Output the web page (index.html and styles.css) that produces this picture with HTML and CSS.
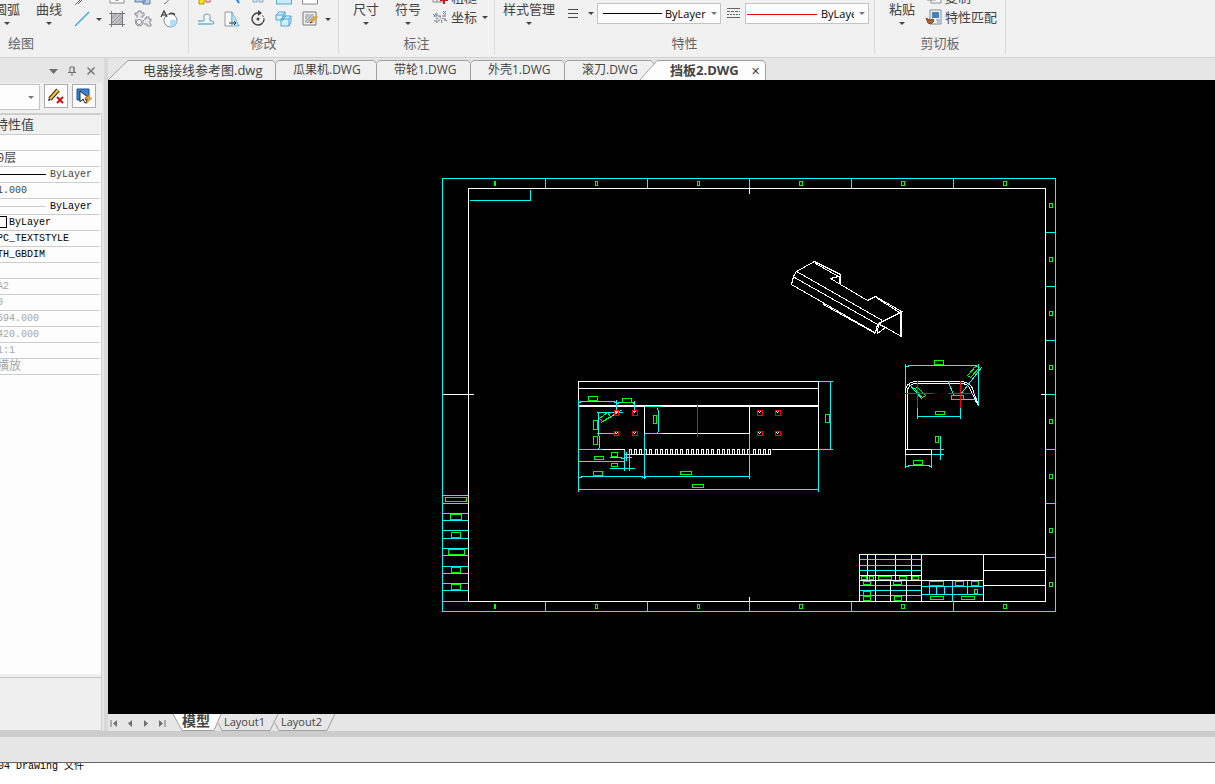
FILE: index.html
```
<!DOCTYPE html>
<html lang="zh-CN">
<head>
    <meta charset="UTF-8">
    <meta name="viewport" content="width=device-width, initial-scale=1.0">
    <title>挡板2.DWG</title>
    <link rel="stylesheet" href="styles.css">
</head>
<body>

<header class="ribbon">
    <section class="group group-draw">
        <div class="tools">
            <button class="big-btn">圆弧<span class="caret"></span></button>
            <button class="big-btn">曲线<span class="caret"></span></button>
            <div class="icon-grid grid-draw">
                <button class="icon-btn" aria-label="平行线"><svg width="18" height="18" viewBox="0 0 18 18"><path d="M2 15L13 4M5 14L11 8" stroke="#606068"/></svg></button>
                <span></span>
                <button class="icon-btn" aria-label="矩形"><svg width="18" height="18" viewBox="0 0 18 18"><path d="M2 2h14v11H2z" fill="#fff" stroke="#888"/><path d="M7 10h4" stroke="#555"/></svg></button>
                <button class="icon-btn" aria-label="块"><svg width="18" height="18" viewBox="0 0 18 18"><path d="M1 5h10v7H1zM9 8h7v6H9z" fill="#b4cbe5" stroke="#637f9e"/></svg></button>
                <button class="icon-btn" aria-label="圆弧"><svg width="18" height="18" viewBox="0 0 18 18"><path d="M4 14q5-2 6-9" stroke="#777" fill="none"/></svg></button>
                <button class="icon-btn" aria-label="直线"><svg width="18" height="18" viewBox="0 0 18 18"><path d="M2 16L16 2" stroke="#2ca9dc" stroke-width="1.3"/></svg></button>
                <button class="icon-btn" aria-label="更多直线"><span class="caret"></span></button>
                <button class="icon-btn" aria-label="填充"><svg width="18" height="18" viewBox="0 0 18 18" shape-rendering="crispEdges"><path d="M3 3h11v11H3z" fill="#c0c0c2"/><path d="M4 8l4-4M4 13l9-9M7 14l7-7M11 14l3-3" stroke="#9a9a9c"/><path d="M1 3.500h16M1 14.500h16M3.500 1v16M14.500 1v16" stroke="#77777c"/></svg></button>
                <button class="icon-btn" aria-label="零件"><svg width="18" height="18" viewBox="0 0 18 18"><path d="M3 8V5H1V3h3V1h3v2h3v3H8v2M10 9h2V7h3v2h2v2h-1v3h1v2h-4v-2h-3M2 9q-2 7 4 7q4-1 3-6" fill="#e4e5e8" stroke="#888c94"/><circle cx="5" cy="12" r="2.500" fill="#fff" stroke="#888c94"/></svg></button>
                <button class="icon-btn" aria-label="公式曲线"><svg width="18" height="18" viewBox="0 0 18 18"><circle cx="10.500" cy="10.500" r="6.500" fill="#f5fbff" stroke="#858b92"/><path d="M10 10h7a6.500 6.500 0 0 1-7 7z" fill="#aedff8"/><path d="M1 7l3-6 3 6M2 5h4M9 4q4-2 6 1" fill="none" stroke="#333" stroke-width="1.2"/></svg></button>
            </div>
        </div>
        <h2>绘图</h2>
    </section>

    <section class="group group-edit">
        <div class="tools">
            <div class="icon-grid grid-edit">
                <button class="icon-btn" aria-label="删除"><svg width="18" height="18" viewBox="0 0 18 18"><path d="M2 6h5v8H2z" fill="#ffe011" stroke="#b39700"/><path d="M9 8h4v4H9z" fill="#fff" stroke="#d33a3a"/></svg></button>
                <button class="icon-btn" aria-label="裁剪"><svg width="18" height="18" viewBox="0 0 18 18"><path d="M11 5l5 8" stroke="#2380d8" stroke-width="2"/></svg></button>
                <button class="icon-btn" aria-label="镜像"><svg width="18" height="18" viewBox="0 0 18 18"><path d="M4 7h4v5H4zM10 7h4v5h-4z" fill="#d6ebf7" stroke="#8ba8bb"/></svg></button>
                <button class="icon-btn" aria-label="平移"><svg width="18" height="18" viewBox="0 0 18 18"><path d="M1.500 3h15v11h-15z" fill="#c8ecfc" stroke="#5aa7cf"/></svg></button>
                <button class="icon-btn" aria-label="拉伸"><svg width="18" height="18" viewBox="0 0 18 18"><path d="M1.500 3h15v11h-15z" fill="#fff" stroke="#888"/></svg></button>
                <span></span>
                <button class="icon-btn" aria-label="等距线"><svg width="18" height="18" viewBox="0 0 18 18"><path d="M1 11h5q2 0 1-3-1-4 3-4t3 4q-1 3 1 3 3 0 3 2 0 1-2 1H1" fill="#eef8fd" stroke="#6d91a9"/><path d="M1 11h5M1 14h12" stroke="#6cbfe8"/></svg></button>
                <button class="icon-btn" aria-label="过渡"><svg width="18" height="18" viewBox="0 0 18 18"><path d="M2 2h7v14H2z" fill="#f8f8f8" stroke="#9a9a9a"/><path d="M9 2l7 14H9z" fill="#bfe9ff" stroke="#70b9db"/><path d="M6 13h6M11 11l2 2-2 2" stroke="#333" fill="none"/></svg></button>
                <button class="icon-btn" aria-label="旋转"><svg width="18" height="18" viewBox="0 0 18 18"><path d="M10 3a6 6 0 1 0 5 7" fill="none" stroke="#3d3d42" stroke-width="1.4"/><path d="M15 10a6 6 0 0 0-2-5" fill="none" stroke="#3d3d42" stroke-dasharray="2 1"/><path d="M9 0l4 3-4 3z" fill="#3d3d42"/><circle cx="9" cy="9" r="1.500" fill="#3d3d42"/></svg></button>
                <button class="icon-btn" aria-label="阵列"><svg width="18" height="18" viewBox="0 0 18 18"><path d="M1 5l3-3h6v5l-2 3H1zM1 5h7v5M8 5l2-3M6 9l3-3h7v6l-2 4H6zM6 9h8v7M14 9l2-3" fill="#d5effc" stroke="#4ba5d5"/></svg></button>
                <button class="icon-btn" aria-label="分解"><svg width="18" height="18" viewBox="0 0 18 18"><path d="M2 2h13v13H2z" fill="#f4f4f4" stroke="#77777c"/><path d="M4 4h9v9H4z" fill="#c8c8ca"/><path d="M4 8l4-4M4 12l8-8M6 13l7-7M10 13l3-3" stroke="#a5a5a8"/><path d="M10 12l6-6" stroke="#dda340" stroke-width="3"/><path d="M9 13l2-1" stroke="#333"/></svg></button>
                <button class="icon-btn" aria-label="更多修改"><span class="caret"></span></button>
            </div>
        </div>
        <h2>修改</h2>
    </section>

    <section class="group group-dim">
        <div class="tools">
            <button class="big-btn">尺寸<span class="caret"></span></button>
            <button class="big-btn">符号<span class="caret"></span></button>
            <div class="text-tools">
                <button class="text-btn"><svg width="18" height="18" viewBox="0 0 18 18"><path d="M2 9h11v5H2zM6 9v5M10 9v5" fill="none" stroke="#888"/><path d="M13 8v8M9 12h8" stroke="#c51c1c" stroke-width="2"/></svg>粗糙</button>
                <button class="text-btn"><svg width="18" height="18" viewBox="0 0 18 18"><path d="M6 5v10M3 8h12M3 13h4q3 0 2-5M11 15q-2-8 5-2M14 6v8" stroke="#777b82" fill="none" stroke-dasharray="3 1"/><path d="M2 6l2 2M5 5L3 9M12 3l3 3M15 3l-3 3" stroke="#4b93cf"/></svg>坐标<span class="caret"></span></button>
            </div>
        </div>
        <h2>标注</h2>
    </section>

    <section class="group group-props">
        <div class="tools">
            <button class="big-btn style-btn">样式管理<span class="caret"></span></button>
            <div class="prop-row">
                <button class="icon-btn width-btn" aria-label="线宽"><svg width="12" height="12" viewBox="0 0 12 12" shape-rendering="crispEdges"><path d="M1 2.500h10M1 6.500h10M1 10.500h10" stroke="#4c4c50" stroke-width="1"/></svg><span class="caret"></span></button>
                <div class="combo"><select class="line-black" aria-label="线型"><option>ByLayer</option></select></div>
                <button class="icon-btn type-btn" aria-label="线型设置"><svg width="13" height="12" viewBox="0 0 13 12" shape-rendering="crispEdges"><path d="M0 1.500h13M0 10.500h13" stroke="#666"/><path d="M0 4.500h13" stroke="#666" stroke-dasharray="3 1"/><path d="M0 7.500h13" stroke="#666" stroke-dasharray="2 1"/></svg></button>
                <div class="combo"><select class="line-red" aria-label="颜色"><option>ByLayer</option></select></div>
            </div>
        </div>
        <h2>特性</h2>
    </section>

    <section class="group group-clip">
        <div class="tools">
            <button class="big-btn">粘贴<span class="caret"></span></button>
            <div class="text-tools">
                <button class="text-btn"><svg width="18" height="18" viewBox="0 0 18 18"><path d="M2 3h9v9H2zM6 6h10v9H6z" fill="#fff" stroke="#888"/></svg>复制</button>
                <button class="text-btn"><svg width="18" height="18" viewBox="0 0 18 18"><path d="M5 2h11v14H5z" fill="#f2f6fa" stroke="#828a94"/><path d="M7 4h7v6H7z" fill="#4b7fb8"/><path d="M11 12h4M12 14h3" stroke="#5b8cc0"/><path d="M1 10l4 2 3-1 1 2-3 3-3-1z" fill="#ab6629" stroke="#7b451a"/></svg>特性匹配</button>
            </div>
        </div>
        <h2>剪切板</h2>
    </section>
</header>

<main class="workspace">
    <aside class="panel">
        <div class="panel-title">
            <button aria-label="菜单"><svg width="10" height="10" viewBox="0 0 10 10"><path d="M1 3h9L5.500 8z" fill="#707070"/></svg></button>
            <button aria-label="固定"><svg width="10" height="10" viewBox="0 0 10 10"><path d="M3 6V1h4v5M1 6.500h8M5 6v4M7 1v5" fill="none" stroke="#707070"/></svg></button>
            <button aria-label="关闭"><svg width="10" height="10" viewBox="0 0 10 10"><path d="M1.500 1.500l7 7M8.500 1.500l-7 7" stroke="#707070" stroke-width="1.400"/></svg></button>
        </div>
        <div class="panel-bar">
            <div class="combo pick-combo"><select aria-label="选择对象"><option></option></select></div>
            <button class="panel-btn" aria-label="取消选择"><svg width="18" height="18" viewBox="0 0 18 18"><path d="M3 12l8-9" stroke="#53360c" stroke-width="4.500"/><path d="M3 12l8-9" stroke="#f6c451" stroke-width="2"/><path d="M1 14l1-3 2 2z" fill="#222"/><path d="M10 10l6 6M16 10l-6 6" stroke="#c01818" stroke-width="2"/></svg></button>
            <button class="panel-btn" aria-label="快速选择"><svg width="18" height="18" viewBox="0 0 18 18"><path d="M2 2h12v11H2z" fill="#3a82d0" stroke="#1c5295"/><path d="M5 4v11l3-3 2 4 2-1-2-4h4z" fill="#fff" stroke="#222"/><path d="M14 8l-4 4h3l-2 5 6-6h-3z" fill="#f8a31c" stroke="#c87808" stroke-width=".5"/></svg></button>
        </div>
        <div class="sheet">
            <table>
                <thead>
                    <tr><th scope="col">特性值</th></tr>
                </thead>
                <tbody>
                    <tr><td></td></tr>
                    <tr><td class="cn">0层</td></tr>
                    <tr><td><span class="swatch-line"></span>ByLayer</td></tr>
                    <tr><td>1.000</td></tr>
                    <tr class="strong"><td><span class="swatch-line light"></span>ByLayer</td></tr>
                    <tr class="strong"><td><span class="swatch-box"></span>ByLayer</td></tr>
                    <tr class="strong"><td>PC_TEXTSTYLE</td></tr>
                    <tr class="strong"><td>TH_GBDIM</td></tr>
                    <tr><td></td></tr>
                    <tr class="muted"><td>A2</td></tr>
                    <tr class="muted"><td>0</td></tr>
                    <tr class="muted"><td>594.000</td></tr>
                    <tr class="muted"><td>420.000</td></tr>
                    <tr class="muted"><td>1:1</td></tr>
                    <tr class="muted"><td class="cn">横放</td></tr>
                </tbody>
            </table>
        </div>
        <div class="hint"></div>
    </aside>

    <section class="document">
        <nav class="doc-tabs">
            <button class="doc-tab tab-first"><svg width="169" height="20" viewBox="0 0 169 20"><path d="M0 20L20 .5H165l2.500 3V20"/></svg>电器接线参考图.dwg</button>
            <button class="doc-tab tab-wide"><svg width="102" height="20" viewBox="0 0 102 20"><path d="M-.5 20V3l3-2.500H98l2.500 3V20"/></svg>瓜果机.DWG</button>
            <button class="doc-tab"><svg width="95" height="20" viewBox="0 0 95 20"><path d="M-.5 20V3l3-2.500H91l2.500 3V20"/></svg>带轮1.DWG</button>
            <button class="doc-tab"><svg width="95" height="20" viewBox="0 0 95 20"><path d="M-.5 20V3l3-2.500H91l2.500 3V20"/></svg>外壳1.DWG</button>
            <button class="doc-tab"><svg width="95" height="20" viewBox="0 0 95 20"><path d="M-.5 20V3l3-2.500H86l2.500 3V20"/></svg>滚刀.DWG</button>
            <button class="doc-tab active"><svg width="127" height="20" viewBox="0 0 127 20"><path d="M0 20L17 .5H123l2.500 3V20"/></svg>挡板2.DWG<span class="close">✕</span></button>
        </nav>

        <div class="canvas">
            <svg class="drawing" viewBox="108 80 1107 634" preserveAspectRatio="xMidYMid meet">
                <g transform="translate(.5 .5)" fill="none" shape-rendering="crispEdges">
                    <!-- sheet frame -->
                    <g class="cyan">
                        <path d="M442 178H1055V611H442zM545 178v10M647 178v10M749 178v10M851 178v10M953 178v10M545 601v10M647 601v10M749 601v10M851 601v10M953 601v10"/>
                        <path d="M1045 232h10M1045 286h10M1045 340h10M1045 394h10M1045 449h10M1045 503h10M1045 557h10"/>
                        <path d="M442 495h26M442 503h26M442 513h26M442 520h26M442 530h26M442 538h26M442 548h26M442 555h26M442 566h26M442 573h26M442 583h26M442 590h26M442 601h26"/>
                    </g>
                    <path class="white" d="M468 188H1045V601H468zM749 188v5M749 596v5M442 394h31M1040 394h5"/>
                    <path class="cyan" d="M469 200H530V189"/>
                    <g class="green">
                        <path d="M494 181h1v4h-1zM595 181h2v4h-2zM697 181h2v4h-2zM799 181h3v4h-3zM901 181h3v4h-3zM1003 181h3v4h-3z"/>
                        <path d="M494 604h1v4h-1zM595 604h2v4h-2zM697 604h2v4h-2zM799 604h3v4h-3zM901 604h3v4h-3zM1003 604h3v4h-3z"/>
                        <path d="M1049 203h3v4h-3zM1049 257h3v4h-3zM1049 311h3v4h-3zM1049 365h3v4h-3zM1049 419h3v4h-3zM1049 474h3v4h-3zM1049 528h3v4h-3zM1049 582h3v4h-3z"/>
                        <path d="M445 497h21v4h-21zM450 514h11v5h-11zM451 532h9v5h-9zM448 549h16v5h-16zM451 567h9v5h-9zM451 584h9v5h-9z"/>
                    </g>

                    <!-- title block -->
                    <path class="cyan" d="M859 559h62M859 565h62M859 570h62M859 585h62M859 590h62M859 595h62M921 586h62M921 594h62M929 586v8M936 586v8M944 586v8M952 580v21M967 580v14"/>
                    <path class="white" d="M859 601V554H1045M859 575h62M859 580H983M867 554v26M875 554v47M895 554v26M911 554v26M890 580v21M906 580v21M921 554v47M983 554v47M983 570h62M983 585h62"/>
                    <path class="green" d="M861 576h5v3h-5zM869 576h4v3h-4zM878 576h13v3h-13zM899 576h7v3h-7zM912 576h6v3h-6zM863 581h7v3h-7zM893 581h8v3h-8zM863 591h7v4h-7zM863 596h7v4h-7zM894 596h7v4h-7zM929 581h14v4h-14zM955 581h8v4h-8zM971 581h7v4h-7zM974 589h3v4h-3zM930 596h13v3h-13zM961 596h13v3h-13z"/>

                    <!-- isometric view -->
                    <g class="white">
                        <path d="M814 261L796 271L793 276L791 284L876 333M901 311V336L878 323M796 271L882 320M794 277L879 325M814 261L840 274V284L867 300L875 296L901 311L878 323L877 333M815 263L838 276L830 278L840 284M877 298L899 312M879 324L885 327L877 333"/>
                        <path d="M823 304L875 333M839 275v8M900 311v24M900 312L879 323M877 324l-2 8"/>
                    </g>

                    <!-- front view -->
                    <g class="white">
                        <path d="M578 449V381H818V449M578 388H818M578 449H624M771 449H818M644 406v27M749 406v27M644 433H749"/>
                        <path d="M578 405H818M578 406H818"/>
                        <path d="M624 449v5H770v-5h-2v5M629 454v-5h2v5M634 454v-5h2v5M639 454v-5h2v5M644 454v-5h2v5M649 454v-5h2v5M655 454v-5h2v5M660 454v-5h2v5M665 454v-5h2v5M670 454v-5h2v5M675 454v-5h2v5M680 454v-5h2v5M686 454v-5h2v5M691 454v-5h2v5M696 454v-5h2v5M701 454v-5h2v5M706 454v-5h2v5M711 454v-5h2v5M717 454v-5h2v5M722 454v-5h2v5M727 454v-5h2v5M732 454v-5h2v5M737 454v-5h2v5M742 454v-5h2v5M747 454v-5h2v5M753 454v-5h2v5M758 454v-5h2v5M763 454v-5h2v5"/>
                    </g>
                    <g class="cyan">
                        <path d="M578 399V491M578 402h2v-1h34v1h2M616 399v13M616 403h2v-1h15v1h1M634 400v12"/>
                        <path d="M596 412h26M598 412v23M599 435v12M598 447v2M596 433h20M578 449h23M601 422L622 409"/>
                        <path d="M644 406h16M657 407v2M658 409v22M657 431v2M644 433h16M644 433v45M749 433v45"/>
                        <path d="M609 457h12v1h3v-1h7M609 468h25M624 449v21M629 451v19M626 451v9M578 461h46M578 477h3v-1h61v1h3v-1H749M578 489H818M818 449v42M818 381h14M818 449h14M830 381v68"/>
                    </g>
                    <g class="green">
                        <path d="M588 396h9v4h-9zM622 398h9v4h-9zM593 420h4v9h-4zM593 436h4v8h-4zM611 452h6v4h-6zM594 456h9v3h-9zM611 463h6v3h-6zM593 471h9v4h-9zM653 415h3v8h-3zM680 471h11v3h-11zM692 484h11v3h-11zM825 414h4v8h-4z"/>
                        <path d="M599 418l8-6 3 4-8 5z"/>
                    </g>
                    <path class="red" d="M697 403v33M614 410h4v5h-4zM632 410h5v5h-5zM614 431h4v4h-4zM632 431h5v4h-5zM757 410h5v5h-5zM775 410h5v5h-5zM757 431h5v4h-5zM775 431h5v4h-5z"/>
                    <path class="white" d="M615 411l2 2M617 411l-2 2M633 411l2 2M635 411l-2 2M615 432l2 2M617 432l-2 2M633 432l2 2M635 432l-2 2M758 411l2 2M760 411l-2 2M776 411l2 2M778 411l-2 2M758 432l2 2M760 432l-2 2M776 432l2 2M778 432l-2 2"/>

                    <!-- side view -->
                    <path class="white" d="M905 454V391Q905 382 915 381H961Q970 382 972 388L978 405M907 449V391Q907 384 915 383H961Q967 383 970 389L976 402L978 405M905 449h26v5h-26z"/>
                    <g class="cyan">
                        <path d="M905 363v24M978 363v42M905 366h3v-1h68v1h2M905 454v13M931 454v13M905 466h3v-1h21v1h2"/>
                        <path d="M931 449h12M931 454h12M940 435v24M917 407v11M960 407v11M917 416h43"/>
                        <path d="M909 384L922 399M960 394L981 367M948 381L953 395M963 399h11"/>
                    </g>
                    <path class="green" d="M934 360h9v4h-9zM935 411h9v3h-9zM951 395h12v4h-12zM935 436h3v6h-3zM913 460h9v4h-9zM914 388l3-1 8 8-3 2zM967 375l9-10 3 2-9 10z"/>
                    <path class="red" d="M917 380v27M904 393h28M960 380v27M947 393h27"/>
                </g>
            </svg>
        </div>

        <nav class="sheet-tabs">
            <div class="sheet-nav">
                <button aria-label="第一页"><svg width="8" height="8" viewBox="0 0 8 8"><path d="M1 1v7" stroke="#707070"/><path d="M7 1v7L3 4.500z" fill="#707070"/></svg></button>
                <button aria-label="上一页"><svg width="8" height="8" viewBox="0 0 8 8"><path d="M6 1v7L2 4.500z" fill="#707070"/></svg></button>
                <button aria-label="下一页"><svg width="8" height="8" viewBox="0 0 8 8"><path d="M2 1v7l4-3.500z" fill="#707070"/></svg></button>
                <button aria-label="最后一页"><svg width="8" height="8" viewBox="0 0 8 8"><path d="M1 1v7l4-3.500z" fill="#707070"/><path d="M7 1v7" stroke="#707070"/></svg></button>
            </div>
            <button class="sheet-tab model"><svg width="50" height="17" viewBox="0 0 50 17"><path d="M1 0L10 16.500H42L49 0"/></svg>模型</button>
            <button class="sheet-tab"><svg width="64" height="17" viewBox="0 0 64 17"><path d="M1 9L5 16.500H53L61 0"/></svg>Layout1</button>
            <button class="sheet-tab"><svg width="64" height="17" viewBox="0 0 64 17"><path d="M1 9L5 16.500H53L61 0"/></svg>Layout2</button>
        </nav>
    </section>
</main>

<div class="dock"></div>
<footer class="command">04 Drawing 文件</footer>

</body>
</html>
```
FILE: styles.css
```
* {
    box-sizing: border-box;
}

body {
    margin: 0;
    height: 100vh;
    display: flex;
    flex-direction: column;
    overflow: hidden;
    background: #e6e6e6;
    color: #444444;
    font-family: "Open Sans", "Noto Sans CJK SC", sans-serif;
    font-size: 13px;
}

button {
    padding: 0;
    border: none;
    background: none;
    color: inherit;
    font: inherit;
    white-space: nowrap;
}

svg {
    display: block;
    fill: none;
}

.caret {
    width: 0;
    height: 0;
    border: 3px solid transparent;
    border-top-color: #444444;
    border-bottom: 0;
}

/* ribbon */

.ribbon {
    display: flex;
    flex: none;
    height: 58px;
    background: #f1f1f1;
    border-bottom: 1px solid #d2d2d2;
    overflow: hidden;
}

.group {
    display: flex;
    flex-direction: column;
    flex: none;
    height: 54px;
    border-right: 1px solid #d9d9d9;
}

.group h2 {
    margin: 0;
    font-size: 13px;
    line-height: 18px;
    font-weight: normal;
    text-align: center;
    color: #666666;
}

.tools {
    display: flex;
    height: 34px;
}

.group-draw {
    width: 335px;
    margin-left: -146px;
}

.group-draw .tools {
    justify-content: flex-end;
    padding-right: 6px;
}

.group-edit {
    width: 150px;
}

.group-edit .tools {
    padding-left: 4px;
}

.group-dim {
    width: 156px;
}

.group-dim .tools,
.group-clip .tools {
    padding-left: 6px;
}

.group-props {
    width: 380px;
}

.group-clip {
    width: 131px;
}

.big-btn {
    display: flex;
    flex-direction: column;
    align-items: center;
    width: 42px;
    line-height: 18px;
}

.big-btn .caret {
    margin-top: 4px;
}

.style-btn {
    width: 68px;
}

.icon-grid {
    display: grid;
    grid-auto-rows: 20px;
    margin-top: -11px;
}

.grid-draw {
    grid-template-columns: 24px 10px 26px 26px 26px;
}

.grid-edit {
    grid-template-columns: repeat(5, 26px) 10px;
}

.icon-btn {
    display: flex;
    align-items: center;
    justify-content: center;
}

.text-tools {
    margin-top: -13px;
    padding-left: 2px;
}

.text-btn {
    display: flex;
    align-items: center;
    gap: 2px;
    height: 20px;
    line-height: 18px;
}

.text-btn .caret {
    margin-left: 3px;
}

.prop-row {
    display: flex;
    align-items: center;
    height: 20px;
    margin-top: 3px;
}

.width-btn {
    gap: 9px;
    width: 34px;
}

.type-btn {
    width: 24px;
}

.combo {
    position: relative;
    flex: none;
    width: 124px;
    height: 21px;
}

.combo select {
    appearance: none;
    width: 100%;
    height: 100%;
    padding: 0 14px 0 67px;
    border: 1px solid #c4c4c4;
    border-radius: 0;
    background: #fdfdfd no-repeat 5px 9px;
    color: #000000;
    font-family: inherit;
    font-size: 11px;
}

.combo .line-black {
    background-image: linear-gradient(#000000, #000000);
    background-size: 59px 1px;
}

.combo .line-red {
    padding: 0 14px 0 75px;
    background-image: linear-gradient(#ff0000, #ff0000);
    background-size: 70px 1px;
    background-position: 1px 10px;
}

.combo::after {
    content: "";
    position: absolute;
    right: 4px;
    top: 9px;
    border: 3px solid transparent;
    border-top-color: #777777;
    border-bottom: 0;
    pointer-events: none;
}

/* property panel */

.workspace {
    display: flex;
    flex: 1;
    min-height: 0;
}

.panel {
    display: flex;
    flex-direction: column;
    flex: none;
    width: 108px;
    padding-right: 6px;
    border-right: 4px solid #d8d8d8;
}

.panel-title {
    display: flex;
    align-items: center;
    justify-content: flex-end;
    gap: 9px;
    height: 25px;
    padding-right: 2px;
}

.panel-bar {
    display: flex;
    gap: 4px;
    height: 31px;
    padding-top: 1px;
    background: #f0f0f0;
    border-bottom: 1px solid #d0d0d0;
    margin-right: -4px;
}

.panel-bar .pick-combo {
    width: 48px;
    height: 26px;
    margin-left: -8px;
}

.panel-bar .pick-combo select {
    padding: 0;
}

.panel-bar .pick-combo::after {
    right: 6px;
    top: 12px;
}

.panel-btn {
    display: flex;
    align-items: center;
    justify-content: center;
    flex: none;
    width: 24px;
    height: 24px;
    border: 1px solid #adadad;
    background: #fdfdfd;
}

.sheet {
    flex: 1;
    min-height: 0;
    overflow: hidden;
    margin-right: -4px;
    padding-right: 1px;
    background: #fdfdfd;
    border-right: 1px solid #d0d0d0;
}

.sheet table {
    width: 100%;
    border-collapse: collapse;
    table-layout: fixed;
}

.sheet th,
.sheet td {
    height: 16px;
    padding: 0;
    border-bottom: 1px solid #cccccc;
    font-family: "Liberation Mono", "Noto Sans CJK SC", monospace;
    font-size: 10px;
    line-height: 15px;
    text-align: left;
    text-indent: -3px;
    white-space: nowrap;
}

.sheet th {
    height: 20px;
    padding-top: 2px;
    background: #f0f0f0;
    border-top: 1px solid #cccccc;
    font-size: 13px;
    font-weight: normal;
    text-indent: -5px;
}

.sheet .cn {
    padding-top: 1px;
    font-size: 12px;
    line-height: 14px;
}

.strong {
    color: #000000;
}

.muted {
    color: #a6a6a6;
}

.swatch-line {
    display: inline-block;
    width: 49px;
    margin-right: 4px;
    border-top: 1px solid #000000;
    vertical-align: middle;
}

.swatch-line.light {
    border-color: #d0d0d0;
}

.swatch-box {
    display: inline-block;
    width: 10px;
    height: 12px;
    margin-right: 2px;
    border: 1px solid #000000;
    vertical-align: middle;
}

.hint {
    height: 57px;
    margin-right: -4px;
    padding-top: 3px;
    background: #efefef;
    border-right: 1px solid #d0d0d0;
    border-bottom: 1px solid #d0d0d0;
}

.hint::before {
    content: "";
    display: block;
    border-top: 1px solid #c4c4c4;
}

/* document area */

.document {
    display: flex;
    flex-direction: column;
    flex: 1;
    min-width: 0;
}

.doc-tabs {
    display: flex;
    flex: none;
    height: 22px;
    padding-top: 2px;
}

.doc-tab {
    position: relative;
    z-index: 0;
    width: 94px;
    line-height: 20px;
    text-align: left;
    padding-left: 17px;
    font-size: 12px;
}

.doc-tab svg,
.sheet-tab svg {
    position: absolute;
    left: 0;
    top: 0;
    z-index: -1;
    fill: #f0f0f0;
    stroke: #a0a0a0;
}

.tab-first {
    width: 168px;
    padding-left: 35px;
    font-size: 13px;
    line-height: 18px;
}

.tab-wide {
    width: 101px;
}

.doc-tab.active {
    width: 126px;
    margin-left: -19px;
    padding-left: 30px;
    font-size: 13px;
    font-weight: bold;
    line-height: 18px;
}

.doc-tab.active svg {
    fill: #fdfdfd;
}

.close {
    margin-left: 12px;
    font-size: 11px;
    font-weight: normal;
}

.canvas {
    flex: 1;
    min-height: 0;
    background: #000000;
}

.drawing {
    width: 100%;
    height: 100%;
}

.cyan {
    stroke: #00ffff;
}

.white {
    stroke: #ffffff;
}

.green {
    stroke: #00ff00;
}

.red {
    stroke: #ff0000;
}

.sheet-tabs {
    display: flex;
    flex: none;
    height: 17px;
}

.sheet-nav {
    display: flex;
    align-items: center;
    gap: 8px;
    width: 64px;
    padding-left: 2px;
}

.sheet-tab {
    position: relative;
    z-index: 0;
    width: 57px;
    padding-left: 7px;
    padding-bottom: 2px;
    line-height: 15px;
    text-align: left;
    font-size: 11px;
}

.sheet-tab svg {
    fill: none;
}

.sheet-tab.model {
    width: 45px;
    padding-left: 10px;
    padding-bottom: 4px;
    font-size: 14px;
    line-height: 13px;
    font-weight: bold;
}

.sheet-tab.model svg {
    fill: #ffffff;
}

/* docking strip and command line */

.dock {
    flex: none;
    height: 32px;
    border-top: 6px solid #cccccc;
    border-bottom: 1px solid #666666;
}

.command {
    flex: none;
    height: 21px;
    overflow: hidden;
    background: #ffffff;
    color: #000000;
    font-family: "Liberation Mono", "Noto Sans CJK SC", monospace;
    font-size: 10px;
    line-height: 8px;
    text-indent: -2px;
    white-space: nowrap;
}
```
